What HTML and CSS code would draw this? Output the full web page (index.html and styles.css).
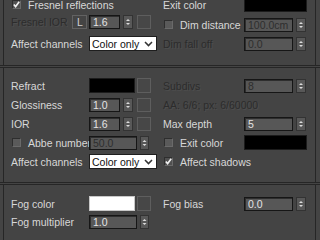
FILE: index.html
```html
<!DOCTYPE html>
<html>

<head>
  <title>VRayMtl parameters</title>
  <meta charset="utf-8">
  <link rel="stylesheet" href="styles.css">
</head>

<body>
  <!-- Reflection (tail) -->
  <div class="section fresnel">
    <div class="col left">
      <div class="row r1">
        <span class="check on"><svg width="7" height="7" viewBox="0 0 7 7"><polyline points="0.8,3.4 2.6,5.6 6.2,0.8" /></svg></span>
        <span class="text">Fresnel reflections</span>
      </div>
      <div class="row r2">
        <span class="label short off">Fresnel IOR</span>
        <span class="lock">L</span>
        <span class="num">1.6</span>
        <span class="spin"><svg width="8" height="12" viewBox="0 0 8 12"><polygon points="2,5 4,3 6,5" /><polygon points="2,7 4,9 6,7" /></svg></span>
        <span class="map"></span>
      </div>
      <div class="row r3">
        <span class="label">Affect channels</span>
        <span class="select">Color only<svg width="9" height="6" viewBox="0 0 9 6"><polyline points="1,1 4.5,4.6 8,1" /></svg></span>
      </div>
    </div>
    <div class="col right">
      <div class="row r1">
        <span class="label">Exit color</span>
        <span class="swatch wide"></span>
      </div>
      <div class="row r2b">
        <span class="label"><span class="check"></span>Dim distance</span>
        <span class="num long off">100.0cm</span>
        <span class="spin"><svg width="8" height="12" viewBox="0 0 8 12"><polygon points="2,5 4,3 6,5" /><polygon points="2,7 4,9 6,7" /></svg></span>
      </div>
      <div class="row r3b">
        <span class="label off">Dim fall off</span>
        <span class="num long off">0.0</span>
        <span class="spin"><svg width="8" height="12" viewBox="0 0 8 12"><polygon points="2,5 4,3 6,5" /><polygon points="2,7 4,9 6,7" /></svg></span>
      </div>
    </div>
  </div>

  <div class="divider"></div>

  <!-- Refraction -->
  <div class="section refraction">
    <div class="row left">
      <span class="label">Refract</span>
      <span class="swatch"></span>
      <span class="map tight"></span>
    </div>
    <div class="row right">
      <span class="label off">Subdivs</span>
      <span class="num long off">8</span>
      <span class="spin"><svg width="8" height="12" viewBox="0 0 8 12"><polygon points="2,5 4,3 6,5" /><polygon points="2,7 4,9 6,7" /></svg></span>
    </div>

    <div class="row left">
      <span class="label">Glossiness</span>
      <span class="num">1.0</span>
      <span class="spin"><svg width="8" height="12" viewBox="0 0 8 12"><polygon points="2,5 4,3 6,5" /><polygon points="2,7 4,9 6,7" /></svg></span>
      <span class="map"></span>
    </div>
    <div class="row right">
      <span class="text off">AA: 6/6; px: 6/60000</span>
    </div>

    <div class="row left">
      <span class="label">IOR</span>
      <span class="num">1.6</span>
      <span class="spin"><svg width="8" height="12" viewBox="0 0 8 12"><polygon points="2,5 4,3 6,5" /><polygon points="2,7 4,9 6,7" /></svg></span>
      <span class="map"></span>
    </div>
    <div class="row right">
      <span class="label">Max depth</span>
      <span class="num long">5</span>
      <span class="spin"><svg width="8" height="12" viewBox="0 0 8 12"><polygon points="2,5 4,3 6,5" /><polygon points="2,7 4,9 6,7" /></svg></span>
    </div>

    <div class="row left">
      <span class="label"><span class="check"></span>Abbe number</span>
      <span class="num mid off">50.0</span>
      <span class="spin narrow"><svg width="7" height="12" viewBox="0 0 7 12"><polygon points="1.5,5 3.5,3 5.5,5" /><polygon points="1.5,7 3.5,9 5.5,7" /></svg></span>
    </div>
    <div class="row right">
      <span class="label"><span class="check"></span>Exit color</span>
      <span class="swatch wide"></span>
    </div>

    <div class="row left">
      <span class="label">Affect channels</span>
      <span class="select">Color only<svg width="9" height="6" viewBox="0 0 9 6"><polyline points="1,1 4.5,4.6 8,1" /></svg></span>
    </div>
    <div class="row right">
      <span class="check on"><svg width="7" height="7" viewBox="0 0 7 7"><polyline points="0.8,3.4 2.6,5.6 6.2,0.8" /></svg></span>
      <span class="text">Affect shadows</span>
    </div>
  </div>

  <div class="divider"></div>

  <!-- Fog -->
  <div class="section fog">
    <div class="row left">
      <span class="label">Fog color</span>
      <span class="swatch white"></span>
      <span class="map tight"></span>
    </div>
    <div class="row right">
      <span class="label">Fog bias</span>
      <span class="num long">0.0</span>
      <span class="spin"><svg width="8" height="12" viewBox="0 0 8 12"><polygon points="2,5 4,3 6,5" /><polygon points="2,7 4,9 6,7" /></svg></span>
    </div>

    <div class="row left">
      <span class="label">Fog multiplier</span>
      <span class="num mid">1.0</span>
      <span class="spin narrow"><svg width="7" height="12" viewBox="0 0 7 12"><polygon points="1.5,5 3.5,3 5.5,5" /><polygon points="1.5,7 3.5,9 5.5,7" /></svg></span>
    </div>
  </div>
</body>

</html>
```

FILE: styles.css
```css
:root {
  /* 3ds Max dark UI */
  --bg-color: #444444;
  --line-color: #262626;
  --text-color: #d8d8d8;
  --disabled-text: #2c2c2c;
  --field-color: #575757;
  --field-border: #161616;
}

body {
  font-family: "Liberation Sans", Arial, sans-serif;
  font-size: 10.5px;
  background-color: var(--bg-color);
  color: var(--text-color);
  width: 320px;
  height: 240px;
  margin: 0;
  overflow: hidden;
}

/* --- Sections --- */
.section {
  margin: 0 4px 0 3px;
  border-left: 1px solid var(--line-color);
  border-right: 1px solid var(--line-color);
  box-sizing: border-box;
}

.divider {
  height: 1px;
  border-top: 1px solid var(--line-color);
  border-bottom: 1px solid var(--line-color);
}

.fresnel {
  height: 65px;
  display: grid;
  grid-template-columns: 159px 1fr;
}

.fresnel .col {
  display: flex;
  flex-direction: column;
  margin-top: -3px;
}

.refraction {
  height: 114px;
  padding-top: 10px;
  display: grid;
  grid-template-columns: 159px 1fr;
  grid-auto-rows: 15px;
  row-gap: 4px;
}

.fog {
  height: 60px;
  padding-top: 11px;
  display: grid;
  grid-template-columns: 159px 1fr;
  grid-auto-rows: 15px;
  row-gap: 3px;
}

/* --- Rows --- */
.row {
  display: flex;
  align-items: center;
  height: 15px;
  white-space: nowrap;
}

.left {
  padding-left: 7px;
}

.fresnel .r2 {
  margin-top: 2px;
}

.fresnel .r3 {
  margin-top: 7px;
}

.fresnel .r2b {
  margin-top: 5px;
}

.fresnel .r3b {
  margin-top: 4px;
}

.label {
  display: flex;
  align-items: center;
  width: 78px;
  flex: none;
}

.right .label {
  width: 81px;
}

.label.short {
  width: 61px;
}

.off {
  color: var(--disabled-text);
  text-shadow: 1px 1px 0 #4e4e4e;
}

/* --- Controls --- */
.check {
  display: flex;
  align-items: center;
  justify-content: center;
  width: 9px;
  height: 9px;
  box-sizing: border-box;
  margin: 0 7px 0 1px;
  background-color: #5a5a5a;
  border: 1px solid #2e2e2e;
  border-right-color: #6a6a6a;
  border-bottom-color: #6a6a6a;
  flex: none;
}

.check.on {
  background-color: #505050;
}

.check polyline {
  fill: none;
  stroke: #f0f0f0;
  stroke-width: 1.6;
}

.num {
  box-sizing: border-box;
  width: 31px;
  height: 14px;
  line-height: 12px;
  padding-left: 3px;
  background-color: var(--field-color);
  border: 1px solid var(--field-border);
  box-shadow: inset 1px 1px 0 #2e2e2e;
  color: #e4e4e4;
  flex: none;
}

.num.mid {
  width: 48px;
}

.num.long {
  width: 49px;
}

.num.off {
  color: #2e2e2e;
  text-shadow: none;
}

.spin {
  display: flex;
  align-items: center;
  justify-content: center;
  box-sizing: border-box;
  width: 10px;
  height: 14px;
  margin-left: 3px;
  background-color: #585858;
  border: 1px solid #333;
  flex: none;
}

.spin.narrow {
  width: 9px;
}

.spin polygon {
  fill: #dcdcdc;
}

.map {
  box-sizing: border-box;
  width: 14px;
  height: 14px;
  margin-left: 4px;
  background-color: #474747;
  border: 1px solid #5e5e5e;
  flex: none;
}

.map.tight {
  margin-left: 2px;
  height: 15px;
}

.lock {
  box-sizing: border-box;
  width: 15px;
  height: 14px;
  margin-right: 2px;
  padding-left: 4px;
  line-height: 12px;
  border: 1px solid #626262;
  color: #d0d0d0;
  flex: none;
}

.swatch {
  box-sizing: border-box;
  width: 46px;
  height: 15px;
  background-color: #000;
  border: 1px solid #1c1c1c;
  flex: none;
}

.swatch.wide {
  width: 63px;
}

.swatch.white {
  background-color: #fff;
  border-color: #c8c8c8;
}

.select {
  display: flex;
  align-items: center;
  justify-content: space-between;
  box-sizing: border-box;
  width: 68px;
  height: 15px;
  padding: 0 3px 0 2px;
  background-color: #fff;
  border: 1px solid #1e1e1e;
  color: #111;
  flex: none;
}

.select polyline {
  fill: none;
  stroke: #333;
  stroke-width: 1.5;
}
```
